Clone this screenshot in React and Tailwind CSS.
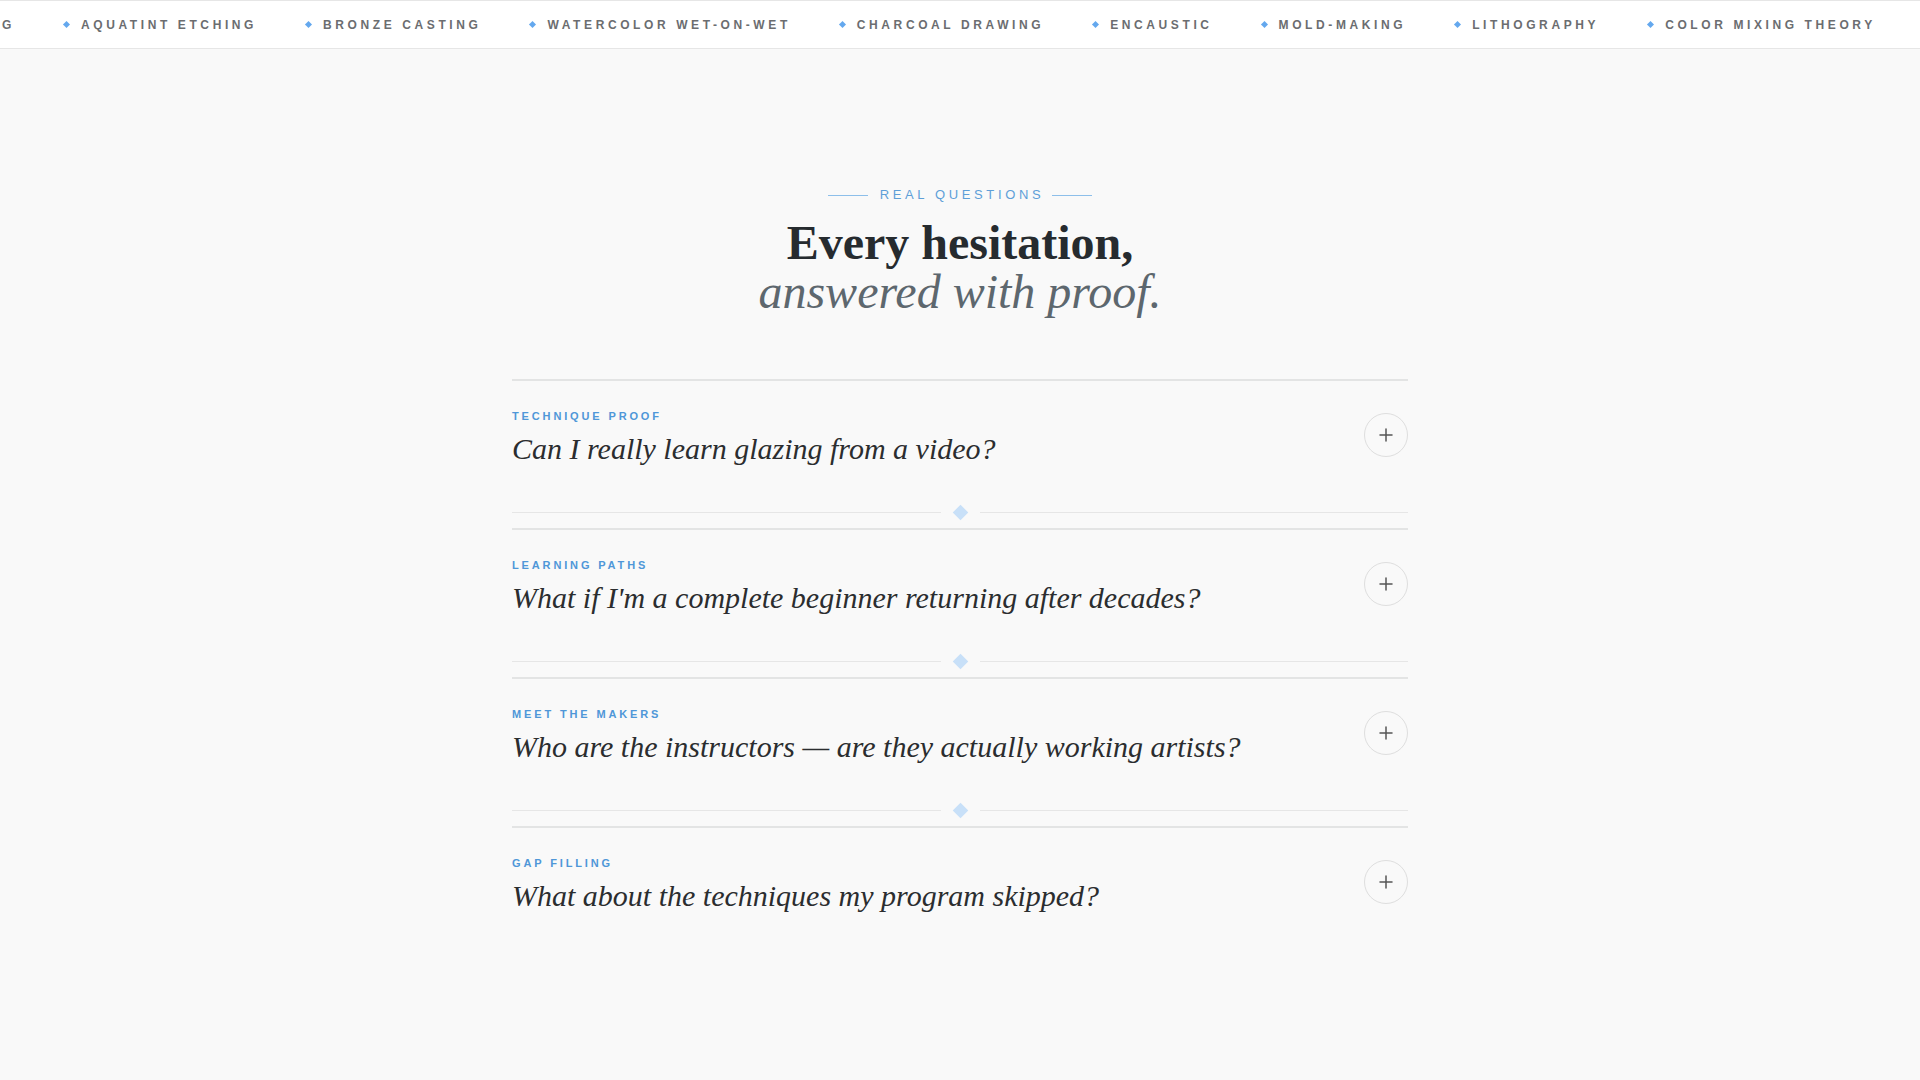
import React from 'react'

const techniques = [
  'AQUATINT ETCHING',
  'BRONZE CASTING',
  'WATERCOLOR WET-ON-WET',
  'CHARCOAL DRAWING',
  'ENCAUSTIC',
  'MOLD-MAKING',
  'LITHOGRAPHY',
  'COLOR MIXING THEORY',
  'OIL GLAZING',
]

const faqs = [
  { tag: 'TECHNIQUE PROOF', q: 'Can I really learn glazing from a video?' },
  { tag: 'LEARNING PATHS', q: "What if I'm a complete beginner returning after decades?" },
  { tag: 'MEET THE MAKERS', q: 'Who are the instructors — are they actually working artists?' },
  { tag: 'GAP FILLING', q: 'What about the techniques my program skipped?' },
]

const sans = "font-['Liberation_Sans',Arial,sans-serif]"
const serif = "font-['Liberation_Serif','Times_New_Roman',serif]"

export default function App(){
  return (
    <div className="min-h-[1080px] bg-[#f9f9f9]">
      <TechniqueTicker />
      <main className="pt-[136px]">
        <header className="text-center">
          <div className={`flex items-center justify-center gap-3 ${sans}`}>
            <span className="h-px w-10 bg-[#8dbfea]" />
            <span className="mr-[-0.3em] text-[13px] leading-5 tracking-[0.28em] text-[#5e9fd8]">REAL QUESTIONS</span>
            <span className="h-px w-10 bg-[#8dbfea]" />
          </div>
          <h2 className={`mt-[13px] text-[48px] leading-[49px] ${serif}`}>
            <span className="block font-bold text-[#262b2f]">Every hesitation,</span>
            <span className="block italic text-[#5d676e]">answered with proof.</span>
          </h2>
        </header>
        <section className="mx-auto mt-[63px] w-[896px]">
          {faqs.map((f, i)=>(
            <FaqItem key={f.tag} item={f} last={i === faqs.length - 1} />
          ))}
        </section>
      </main>
    </div>
  )
}

function TechniqueTicker(){
  const [lead, ...rest] = [techniques[techniques.length - 1], ...techniques.slice(0, -1)]
  return (
    <div className={`flex h-[49px] items-center overflow-hidden border-y border-[#e6e6e6] bg-white ${sans}`}>
      <div className="flex shrink-0 items-center gap-[49px]">
        <div className="flex w-[15px] shrink-0 justify-end overflow-hidden">
          <span className="whitespace-nowrap text-[12px] font-bold tracking-[0.3em] text-[#6b6d70]">{lead}</span>
        </div>
        {rest.map(t=>(
          <div key={t} className="flex shrink-0 items-center gap-[12px]">
            <span className="h-[5px] w-[5px] rotate-45 bg-[#64a8ee]" />
            <span className="whitespace-nowrap text-[12px] font-bold tracking-[0.3em] text-[#6b6d70]">{t}</span>
          </div>
        ))}
      </div>
    </div>
  )
}

function FaqItem({item, last}){
  return (
    <div className="border-t-2 border-[#e3e4e4]">
      <button className="flex w-full items-start justify-between pt-[27px] text-left">
        <div>
          <p className={`text-[11px] font-bold leading-4 tracking-[0.26em] text-[#4f97d8] ${sans}`}>{item.tag}</p>
          <h3 className={`mt-[7px] text-[30px] italic leading-9 text-[#2b2d2f] ${serif}`}>{item.q}</h3>
        </div>
        <span className="mt-[5px] flex h-[44px] w-[44px] shrink-0 items-center justify-center rounded-full border border-[#dedede]">
          <svg width="16" height="16" viewBox="0 0 16 16" fill="none" stroke="#555" strokeWidth="1.5" strokeLinecap="round">
            <path d="M8 2v12M2 8h12" />
          </svg>
        </span>
      </button>
      {!last && (
        <div className="mb-[10px] mt-[40px] flex items-center gap-[14px]">
          <span className="h-px flex-1 bg-[#e6e6e6]" />
          <span className="h-[11px] w-[11px] rotate-45 bg-[#c8e0f8]" />
          <span className="h-px flex-1 bg-[#e6e6e6]" />
        </div>
      )}
    </div>
  )
}
